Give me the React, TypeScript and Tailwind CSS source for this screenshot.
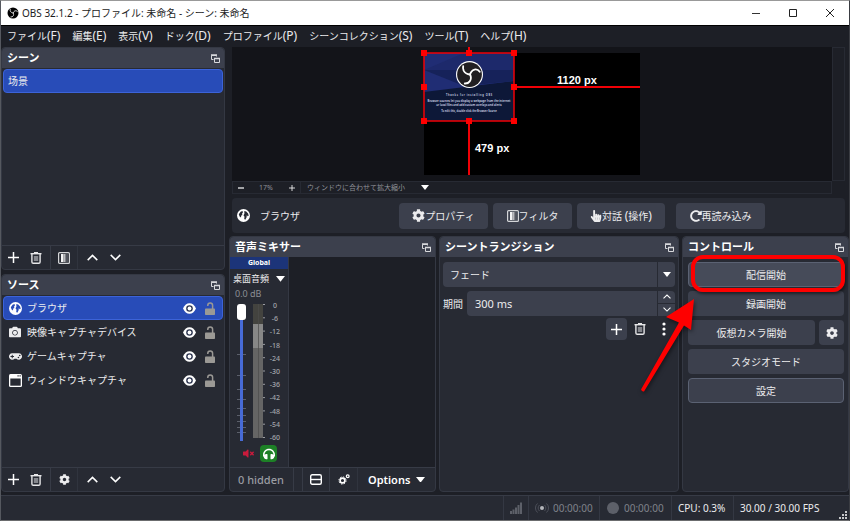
import { type ReactNode } from 'react';
import { FaCamera, FaCog, FaGamepad, FaHandPointer, FaHeadphones, FaRedoAlt, FaVolumeMute } from 'react-icons/fa';

const menus = [
    { label: 'ファイル', key: '(F)' },
    { label: '編集', key: '(E)' },
    { label: '表示', key: '(V)' },
    { label: 'ドック', key: '(D)' },
    { label: 'プロファイル', key: '(P)' },
    { label: 'シーンコレクション', key: '(S)' },
    { label: 'ツール', key: '(T)' },
    { label: 'ヘルプ', key: '(H)' },
];

const meterLabels = ['0', '-6', '-12', '-18', '-24', '-30', '-36', '-42', '-48', '-54', '-60'];
const faderTicks = [50, 71, 85, 95, 104, 111, 117, 123, 128];

function ObsLogo({ className, dark = '#000', light = '#fff' }: { className?: string; dark?: string; light?: string }) {
    return (
        <svg viewBox="0 0 24 24" className={className}>
            <circle cx="12" cy="12" r="12" fill={light} />
            <circle cx="12" cy="12" r="11" fill={dark} />
            <g fill="none" stroke={light} strokeWidth="1.6" strokeLinecap="round">
                <path d="M12.500 12C10 11.800 8 10.800 6.800 8.500 6.200 7.200 6 6 6.400 4.500" />
                <path d="M12.500 12c.6-2.400 2-3.900 4-4.400 2-.4 3.500.4 4.600 1.900" />
                <path d="M12.500 12c1.100 2.200 1 4.300-.3 6.100-1 1.400-2.500 2-4.400 1.900" />
            </g>
        </svg>
    );
}

function GlobeIcon({ land = '#272a33' }: { land?: string }) {
    return (
        <svg viewBox="0 0 13 13" className="size-[13px]">
            <circle cx="6.500" cy="6.500" r="6.500" fill="#fefefe" />
            <path d="M1.800 5.200L3.600 2.800 5.400 2l.6 1.300-1 1.400.4 1.200-1.200.7-.2 1.800-1.400-1z" fill={land} />
            <path d="M7.300 2l1.900.4 1.900 2 .6 2.300-1.100.6-.7-1.300-.4 2.600-1.200 2.200-1.100-.8.3-2.300-1-1.400.9-1.500z" fill={land} />
        </svg>
    );
}

function PopoutIcon() {
    return (
        <svg viewBox="0 0 9 9" className="size-[9px]" fill="none" stroke="#d8d9dc">
            <path d="M2.500 5.500h-2v-4h5v1" />
            <path d="M0 1h6" strokeWidth="1.500" />
            <path d="M3.500 4.500h5v4h-5z" />
            <path d="M3 4.500h6" strokeWidth="1.500" />
        </svg>
    );
}

function PlusIcon({ className = 'size-[11px]' }: { className?: string }) {
    return (
        <svg viewBox="0 0 11 11" className={className} stroke="#fefefe" strokeWidth="1.500">
            <path d="M5.500 0v11M0 5.500h11" />
        </svg>
    );
}

function TrashIcon() {
    return (
        <svg viewBox="0 0 12 12" className="size-3" fill="none" stroke="#e6e6e8">
            <path d="M.5 1.700h11" strokeWidth="1.400" />
            <path d="M4 .6h4" strokeWidth="1.200" />
            <path d="M1.900 2v8q0 1.300 1.300 1.300h5.600q1.300 0 1.300-1.300V2" strokeWidth="1.400" />
            <path d="M3.800 4h4.400v5H3.800z" fill="#85878d" stroke="none" />
        </svg>
    );
}

function FilterIcon() {
    return (
        <svg viewBox="0 0 12 12" className="size-3">
            <rect x="0.600" y="0.600" width="10.800" height="10.800" rx="1" fill="none" stroke="#d4d5d8" strokeWidth="1.200" />
            <path d="M3 2h2.500v8H3z" fill="#f4f4f5" />
            <path d="M5.500 2H7v8H5.500z" fill="#b9babe" />
            <path d="M7 2h1.500v8H7z" fill="#7f8188" />
            <path d="M8.500 2H10v8H8.500z" fill="#50535d" />
        </svg>
    );
}

function ChevronIcon({ down, className = 'w-[11px]' }: { down?: boolean; className?: string }) {
    return (
        <svg viewBox="0 0 11 7" className={className} fill="none" stroke="#fefefe" strokeWidth="1.500">
            <path d={down ? 'M.7.900l4.800 4.700L10.300.9' : 'M.7 6.100l4.800-4.700 4.800 4.700'} />
        </svg>
    );
}

function CaretIcon({ className = 'w-2' }: { className?: string }) {
    return (
        <svg viewBox="0 0 8 5" className={className} fill="#fff">
            <path d="M0 0h8L4 5z" />
        </svg>
    );
}

function EyeIcon() {
    return (
        <svg viewBox="0 0 13 11" className="h-[11px] w-[13px]">
            <path d="M0 5.500C1.500 2 3.800.3 6.500.3S11.500 2 13 5.500c-1.500 3.500-3.800 5.200-6.500 5.200S1.500 9 0 5.500z" fill="#fefefe" />
            <circle cx="6.500" cy="5.500" r="3.300" fill="#2d3550" />
            <circle cx="6.500" cy="5.500" r="1.900" fill="#fefefe" />
        </svg>
    );
}

function UnlockIcon() {
    return (
        <svg viewBox="0 0 10 13" className="h-[13px] w-[10px]">
            <rect y="6.500" width="10" height="6.500" rx="0.800" fill="#9b9995" />
            <path d="M2.800 4V3.300a2.400 2.400 0 0 1 4.800 0V7.500" fill="none" stroke="#9b9995" strokeWidth="1.500" />
        </svg>
    );
}

function WindowIcon() {
    return (
        <svg viewBox="0 0 13 13" className="size-[13px]">
            <rect width="13" height="13" rx="1.500" fill="#fefefe" />
            <path d="M1.300 4.500h10.400v7.200H1.300z" fill="#272a33" />
            <path d="M8.500 1.300h1.200v1.200H8.500zM10.500 1.300h1.200v1.200h-1.200z" fill="#272a33" />
        </svg>
    );
}

const sources = [
    { name: 'ブラウザ', icon: <GlobeIcon land="#284cb8" />, selected: true },
    { name: '映像キャプチャデバイス', icon: <FaCamera className="size-3" /> },
    { name: 'ゲームキャプチャ', icon: <FaGamepad className="size-[13px]" /> },
    { name: 'ウィンドウキャプチャ', icon: <WindowIcon /> },
];

function Dock({ title, className = '', children }: { title: string; className?: string; children: ReactNode }) {
    return (
        <section className={`flex min-h-0 min-w-0 flex-col rounded border border-[#343843] bg-[#272a33] ${className}`}>
            <header className="flex h-5 shrink-0 items-center justify-between rounded-t bg-[#3c404d] pr-1 pl-[5px]">
                <h2 className="text-[11px] leading-4 font-semibold text-white">{title}</h2>
                <button aria-label={`${title}を切り離す`}>
                    <PopoutIcon />
                </button>
            </header>
            {children}
        </section>
    );
}

function ListToolbar({ middle, middleLabel }: { middle: ReactNode; middleLabel: string }) {
    return (
        <div className="flex h-6 shrink-0 items-center border-t border-[#373b46]">
            <button aria-label="追加" className="flex w-[23px] justify-center"><PlusIcon /></button>
            <button aria-label="削除" className="flex w-[22px] justify-center"><TrashIcon /></button>
            <span className="ml-[3px] h-full w-px bg-[#373b46]" />
            <button aria-label={middleLabel} className="flex w-[26px] justify-center">{middle}</button>
            <span className="h-full w-px bg-[#30343e]" />
            <button aria-label="上へ" className="ml-0.5 flex w-6 justify-center"><ChevronIcon /></button>
            <button aria-label="下へ" className="flex w-[22px] justify-center"><ChevronIcon down /></button>
        </div>
    );
}

function Preview() {
    return (
        <svg viewBox="0 0 216 122" className="h-[122px] w-[216px] overflow-visible">
            <rect width="216" height="122" fill="#000" />
            {/* browser source */}
            <rect width="90" height="68" fill="#0d1838" />
            <path d="M0 0h90v28L0 39z" fill="#202d74" />
            <path d="M0 17h90v11L40 33z" fill="#16225a" />
            <path d="M40 0h50v17L0 17z" fill="#1d296b" />
            <g fill="#d4d9ea" fontFamily="'Noto Sans'" fontWeight="600" textAnchor="middle">
                <text x="45" y="42.500" fontSize="2.500">T h a n k s &#160; f o r &#160; i n s t a l l i n g &#160; O B S</text>
                <text x="45" y="49" fontSize="2.800">Browser sources let you display a webpage from the internet</text>
                <text x="45" y="52.500" fontSize="2.800">or local files and add custom overlays and alerts</text>
                <text x="45" y="58.500" fontSize="2.600">To edit this, double click the Browser Source</text>
            </g>
            <svg x="32" y="8" width="27" height="27">
                <ObsLogo className="size-[27px]" dark="#211f22" />
            </svg>
            <g fill="none" stroke="#f00006" strokeWidth="2">
                <path d="M45-6V0M45 68v54M90 34h126" />
                <rect width="90" height="68" strokeWidth="1.500" />
            </g>
            <g fill="#ff0000">
                <path d="M-3-3h6v6h-6zM42-3h6v6h-6zM87-3h6v6h-6zM-3 31h6v6h-6zM87 31h6v6h-6zM-3 65h6v6h-6zM42 65h6v6h-6zM87 65h6v6h-6z" />
            </g>
            <g fill="#fff" fontFamily="'Liberation Sans'" fontWeight="700" fontSize="11">
                <text x="133" y="31">1120 px</text>
                <text x="51" y="99">479 px</text>
            </g>
        </svg>
    );
}

function ContextButton({ icon, children, className = '' }: { icon: ReactNode; children: ReactNode; className?: string }) {
    return (
        <button className={`flex h-[26px] items-center justify-center rounded-sm bg-[#3c404d] ${className}`}>
            {icon}
            <span className="whitespace-nowrap">{children}</span>
        </button>
    );
}

function Mixer() {
    return (
        <Dock title="音声ミキサー">
            <div className="flex min-h-0 flex-1 bg-[#1d1f26]">
                <div className="flex w-[59px] flex-col border-r border-[#343843] bg-[#272a33]">
                    <div className="h-3 bg-[#1c3479] text-center text-[7px] leading-3 font-bold text-white">Global</div>
                    <button className="mt-0.5 flex h-4 items-center justify-between px-[3px]">
                        <span className="whitespace-nowrap text-[9px]">桌面音頻</span>
                        <CaretIcon className="w-[9px]" />
                    </button>
                    <div className="px-[5px] text-[9px] leading-[14px] text-[#8c8e95]">0.0 dB</div>
                    <div className="mt-[3px] flex h-[137px] pl-[7px]">
                        <div className="relative w-[9px]">
                            <svg viewBox="0 0 9 137" className="absolute h-full w-full" stroke="#5c606b">
                                {faderTicks.map((y) => (
                                    <path key={y} d={`M0 ${y}.5h9`} />
                                ))}
                            </svg>
                            <input
                                type="range"
                                aria-label="桌面音頻"
                                defaultValue={100}
                                className="relative block h-[137px] w-[9px] appearance-none bg-[linear-gradient(to_right,transparent_3px,#476bd7_3px,#476bd7_6px,transparent_6px)] [direction:rtl] [writing-mode:vertical-lr] [&::-webkit-slider-thumb]:h-4 [&::-webkit-slider-thumb]:w-[9px] [&::-webkit-slider-thumb]:appearance-none [&::-webkit-slider-thumb]:rounded-[3px] [&::-webkit-slider-thumb]:bg-white"
                            />
                        </div>
                        <svg viewBox="0 0 13 134" className="ml-[7px] h-[134px] w-[13px] shrink-0">
                            <path d="M0 0h10v20H0z" fill="#43433f" />
                            <path d="M0 20h10v24H0z" fill="#878787" />
                            <path d="M0 44h10v90H0z" fill="#656565" />
                            <path d="M5.500 0v134" stroke="#4c4c4c" strokeOpacity="0.700" />
                            {meterLabels.map((l, i) => (
                                <path key={l} d={`M10 ${0.5 + i * 13.3}h2`} stroke="#9a9ca2" />
                            ))}
                        </svg>
                        <div className="-mt-0.5 flex h-[140px] w-[18px] flex-col justify-between text-center text-[7px] leading-[8px] font-medium text-[#a3a5ab]">
                            {meterLabels.map((l) => (
                                <span key={l}>{l}</span>
                            ))}
                        </div>
                    </div>
                    <div className="mt-1 flex items-center gap-1.5 pl-[13px]">
                        <button aria-label="ミュート"><FaVolumeMute className="size-[11px] text-[#c81b3c]" /></button>
                        <button aria-label="モニター" className="flex size-[17px] items-center justify-center rounded-sm bg-[#1d8026]">
                            <FaHeadphones className="size-3 text-white" />
                        </button>
                    </div>
                </div>
            </div>
            <div className="flex h-6 shrink-0 items-center border-t border-[#373b46] pl-2">
                <span className="w-[55px] whitespace-nowrap text-[11px] font-medium text-[#9a9ca2]">0 hidden</span>
                <span className="h-full w-px bg-[#373b46]" />
                <span className="ml-2 h-full w-px bg-[#373b46]" />
                <button aria-label="レイアウト" className="flex w-[26px] justify-center">
                    <svg viewBox="0 0 12 11" className="h-[11px] w-3" fill="none" stroke="#fefefe" strokeWidth="1.400">
                        <rect x="0.700" y="0.700" width="10.600" height="9.600" rx="1.500" />
                        <path d="M1 5.500h10" />
                    </svg>
                </button>
                <span className="h-full w-px bg-[#373b46]" />
                <button aria-label="詳細設定" className="flex w-[27px] justify-center">
                    <svg viewBox="0 0 12 11" className="h-[11px] w-3" fill="none" stroke="#fefefe">
                        <circle cx="4.500" cy="6.500" r="2.400" strokeWidth="1.600" />
                        <circle cx="4.500" cy="6.500" r="3.600" strokeWidth="1" strokeDasharray="1.400 1.430" />
                        <circle cx="9.700" cy="2.300" r="1.400" strokeWidth="1.200" />
                    </svg>
                </button>
                <span className="h-full w-px bg-[#30343e]" />
                <button className="ml-2.5 flex items-center gap-1.5 text-[11px] font-semibold text-white">
                    Options
                    <CaretIcon className="w-[9px]" />
                </button>
            </div>
        </Dock>
    );
}

function Transitions() {
    return (
        <Dock title="シーントランジション">
            <div className="flex flex-col gap-1 px-[3px] pt-[5px]">
                <div className="relative">
                    <select aria-label="トランジション" className="block h-[25px] w-full appearance-none rounded-sm bg-[#3c404d] px-[7px]">
                        <option>フェード</option>
                    </select>
                    <span className="pointer-events-none absolute inset-y-0 right-0 flex w-[18px] items-center justify-center border-l border-[#272a33]">
                        <CaretIcon className="w-2" />
                    </span>
                </div>
                <div className="flex items-center gap-1">
                    <label htmlFor="duration" className="w-5 whitespace-nowrap">期間</label>
                    <div className="flex h-[25px] min-w-0 flex-1 rounded-sm bg-[#3c404d]">
                        <input id="duration" defaultValue="300 ms" className="min-w-0 flex-1 bg-transparent px-2 text-[11px]" />
                        <div className="flex w-[18px] flex-col border-l border-[#272a33]">
                            <button aria-label="増やす" className="flex flex-1 items-center justify-center border-b border-[#272a33]">
                                <ChevronIcon className="w-2" />
                            </button>
                            <button aria-label="減らす" className="flex flex-1 items-center justify-center">
                                <ChevronIcon down className="w-2" />
                            </button>
                        </div>
                    </div>
                </div>
                <div className="-mt-0.5 flex items-center justify-end">
                    <button aria-label="追加" className="flex h-[22px] w-[21px] items-center justify-center rounded-sm bg-[#3c404d]"><PlusIcon /></button>
                    <button aria-label="削除" className="flex w-[26px] justify-center"><TrashIcon /></button>
                    <button aria-label="メニュー" className="flex w-[22px] justify-center">
                        <svg viewBox="0 0 4 14" className="h-[14px] w-1" fill="#fefefe">
                            <circle cx="2" cy="2" r="1.600" />
                            <circle cx="2" cy="7" r="1.600" />
                            <circle cx="2" cy="12" r="1.600" />
                        </svg>
                    </button>
                </div>
            </div>
        </Dock>
    );
}

function Controls() {
    return (
        <Dock title="コントロール" className="relative">
            <div className="flex flex-col gap-1 pt-[5px] pr-1 pl-[5px]">
                <button className="h-[25px] rounded-sm border border-[#5b6273] bg-[#464b59]">配信開始</button>
                <button className="h-[25px] rounded-sm bg-[#3c404d]">録画開始</button>
                <div className="flex gap-1">
                    <button className="h-[25px] flex-1 rounded-sm bg-[#3c404d]">仮想カメラ開始</button>
                    <button aria-label="仮想カメラの設定" className="flex size-[25px] items-center justify-center rounded-sm bg-[#3c404d]">
                        <FaCog className="size-3" />
                    </button>
                </div>
                <button className="h-[25px] rounded-sm bg-[#3c404d]">スタジオモード</button>
                <button className="h-[25px] rounded-sm border border-[#5b6273] bg-[#3c404d]">設定</button>
            </div>
            {/* highlight on the stream button */}
            <div className="pointer-events-none absolute top-[18px] right-[3px] left-2 h-[37px] rounded-xl border-4 border-[#fe0000] shadow-[1px_2px_3px_rgba(0,0,0,0.5)]" />
            <svg viewBox="0 0 60 96" className="pointer-events-none absolute top-[60px] -left-[44px] h-24 w-[60px] drop-shadow-[1px_2px_2px_rgba(0,0,0,0.5)]" fill="#fe0000">
                <path d="M55 2L52 33L45 28.500L5 94.500Q3 95 2 92.500L40 25.500L27 20z" />
            </svg>
        </Dock>
    );
}

export default function App() {
    return (
        <div className="flex h-screen min-h-[521px] flex-col overflow-hidden border border-t-[#999] border-r-[#3a3c42] border-b-[#6b6c6e] border-l-[#55585f] bg-[#1d1f26] font-['Noto_Sans','Noto_Sans_CJK_JP','Noto_Sans_CJK_SC',sans-serif] text-[10px] leading-4 text-[#ececee]">
            <div className="flex h-6 shrink-0 items-center bg-white pl-1.5 text-[#1c1c1c]">
                <ObsLogo className="size-3" />
                <h1 className="ml-[3px] flex-1 whitespace-nowrap">OBS 32.1.2 - プロファイル: 未命名 - シーン: 未命名</h1>
                <div className="flex">
                    <button aria-label="最小化" className="flex w-[37px] items-center justify-center">
                        <svg viewBox="0 0 8 8" className="size-2" stroke="#333"><path d="M0 4.500h8" /></svg>
                    </button>
                    <button aria-label="最大化" className="flex w-[37px] items-center justify-center">
                        <svg viewBox="0 0 8 8" className="size-2" fill="none" stroke="#222"><path d="M.5.5h7v7h-7z" /></svg>
                    </button>
                    <button aria-label="閉じる" className="flex w-[38px] items-center justify-center">
                        <svg viewBox="0 0 8 8" className="size-2" stroke="#222"><path d="M0 0l8 8M8 0L0 8" /></svg>
                    </button>
                </div>
            </div>

            <nav className="flex h-[22px] shrink-0 items-center gap-3 border-t border-black pb-0.5 pl-1.5">
                {menus.map((m) => (
                    <button key={m.key} className="whitespace-nowrap">
                        {m.label}
                        <span className="text-xs leading-4">{m.key}</span>
                    </button>
                ))}
            </nav>

            <main className="flex min-h-0 flex-1 gap-1">
                <div className="flex w-[224px] shrink-0 flex-col gap-1">
                    <Dock title="シーン" className="shrink grow-[224] basis-0">
                        <ul className="flex-1 p-px">
                            <li className="flex h-6 items-center rounded-sm border border-[#3c63d8] bg-[#284cb8] px-1">场景</li>
                        </ul>
                        <ListToolbar middle={<FilterIcon />} middleLabel="フィルタ" />
                    </Dock>
                    <Dock title="ソース" className="shrink grow-[218] basis-0">
                        <ul className="flex-1 p-px">
                            {sources.map((s) => (
                                <li key={s.name} className={`flex h-6 items-center rounded-sm border pr-[7px] pl-[5px] ${s.selected ? 'border-[#3c63d8] bg-[#284cb8]' : 'border-transparent'}`}>
                                    <span className="flex w-[18px] items-center">{s.icon}</span>
                                    <span className="flex-1 whitespace-nowrap">{s.name}</span>
                                    <button aria-label={`${s.name}の表示`}><EyeIcon /></button>
                                    <button aria-label={`${s.name}のロック`} className="ml-[9px]"><UnlockIcon /></button>
                                </li>
                            ))}
                        </ul>
                        <ListToolbar middle={<FaCog className="size-[11px]" />} middleLabel="プロパティ" />
                    </Dock>
                </div>

                <div className="flex min-w-0 flex-1 flex-col">
                    <div className="flex min-h-0 flex-1 pr-1 pl-[3px]">
                        <div className="flex min-w-0 flex-1 flex-col">
                            <div className="flex min-h-0 flex-1 items-center justify-center overflow-hidden bg-[#131419]">
                                <Preview />
                            </div>
                            <div className="flex h-[13px] shrink-0 items-center border border-[#272a33] text-[7px] leading-[11px] text-[#8f9198]">
                                <button aria-label="縮小" className="flex w-4 justify-center">
                                    <svg viewBox="0 0 6 6" className="size-1.5" stroke="#fefefe" strokeWidth="1.200"><path d="M0 3h6" /></svg>
                                </button>
                                <span className="w-[34px] text-center">17%</span>
                                <button aria-label="拡大" className="flex w-[17px] justify-center"><PlusIcon className="size-1.5" /></button>
                                <button className="flex items-center gap-4 border-l border-[#272a33] pl-1.5">
                                    <span className="whitespace-nowrap">ウィンドウに合わせて拡大縮小</span>
                                    <CaretIcon className="w-2" />
                                </button>
                            </div>
                        </div>
                        <div className="mb-[13px] w-[13px] border border-[#272a33]" />
                    </div>

                    <div className="mt-1 mr-1 ml-[3px] flex h-[35px] shrink-0 items-center rounded-sm bg-[#272a33]">
                        <span className="ml-[5px]"><GlobeIcon /></span>
                        <span className="ml-2.5 w-[139px]">ブラウザ</span>
                        <div className="flex flex-1 gap-[5px]">
                            <ContextButton icon={<FaCog className="size-[13px]" />} className="w-[89px]">プロパティ</ContextButton>
                            <ContextButton icon={<FilterIcon />} className="w-[79px]">フィルタ</ContextButton>
                            <ContextButton icon={<FaHandPointer className="size-3" />} className="w-[88px]">
                                対話 <span className="text-xs leading-4">(</span>操作<span className="text-xs leading-4">)</span>
                            </ContextButton>
                            <ContextButton icon={<FaRedoAlt className="size-3" />} className="ml-1.5 w-[89px]">再読み込み</ContextButton>
                        </div>
                    </div>

                    <div className="mt-[3px] grid h-[256px] shrink-0 grid-cols-[207fr_240fr_167fr] gap-[3px]">
                        <Mixer />
                        <Transitions />
                        <Controls />
                    </div>
                </div>
            </main>

            <footer className="mt-[3px] flex h-[25px] shrink-0 items-stretch justify-end border-t border-[#373b46] bg-[#272a33]">
                <div className="flex w-[25px] items-center justify-center border-l border-[#343843]">
                    <svg viewBox="0 0 12 12" className="size-3" fill="#5d6069">
                        <path d="M0 9h2v3H0zM2.500 7.500h2V12h-2zM5 5.500h2V12H5zM7.500 3h2v9h-2zM10 .5h2V12h-2z" />
                    </svg>
                </div>
                <div className="flex w-[71px] items-center gap-1 border-l border-[#343843] pl-1.5 text-[#7f828a]">
                    <svg viewBox="0 0 14 10" className="h-2.5 w-3.5" fill="none" stroke="#4d505a">
                        <circle cx="7" cy="5" r="2" fill="#b4b6bb" stroke="none" />
                        <path d="M4.500 2a4 4 0 0 0 0 6M9.500 2a4 4 0 0 1 0 6M2.500.5a6 6 0 0 0 0 9M11.500.5a6 6 0 0 1 0 9" />
                    </svg>
                    00:00:00
                </div>
                <div className="flex w-[72px] items-center gap-[5px] border-l border-[#343843] pl-[7px] text-[#7f828a]">
                    <span className="size-3 rounded-full bg-[#5d6069]" />
                    00:00:00
                </div>
                <div className="flex w-[62px] items-center border-l border-[#343843] pl-1.5">CPU: 0.3%</div>
                <div className="flex w-[106px] items-center border-l border-[#343843] pl-1.5">30.00 / 30.00 FPS</div>
                <svg viewBox="0 0 8 8" className="mr-0.5 mb-px size-2 self-end" fill="#c6c7ca">
                    <path d="M6 0h2v2H6zM3 3h2v2H3zM6 3h2v2H6zM0 6h2v2H0zM3 6h2v2H3zM6 6h2v2H6z" />
                </svg>
            </footer>
        </div>
    );
}
